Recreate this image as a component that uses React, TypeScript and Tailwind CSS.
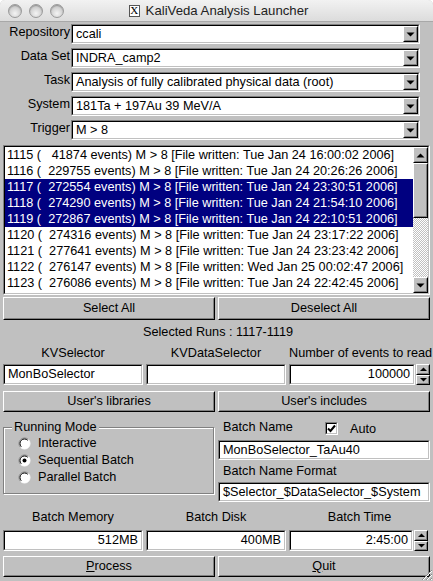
import React from "react";

function Sunken({
  className = "",
  inner = "flex items-center",
  children,
}: {
  className?: string;
  inner?: string;
  children?: React.ReactNode;
}) {
  return (
    <div className={`border border-t-[#808080] border-l-[#808080] border-r-white border-b-white ${className}`}>
      <div className={`h-full w-full border border-t-black border-l-black border-r-[#c0c0c0] border-b-[#c0c0c0] bg-white overflow-hidden ${inner}`}>
        {children}
      </div>
    </div>
  );
}

function Btn({ className = "", children }: { className?: string; children?: React.ReactNode }) {
  return (
    <div className={`border border-t-white border-l-white border-r-black border-b-black bg-[#c0c0c0] ${className}`}>
      <div className="h-full w-full border border-t-[#c0c0c0] border-l-[#c0c0c0] border-r-[#808080] border-b-[#808080] flex items-center justify-center whitespace-nowrap">
        {children}
      </div>
    </div>
  );
}

function Down() {
  return (
    <svg width="9" height="5" viewBox="0 0 9 5">
      <path d="M0.5 0.5 H8.5 L4.5 4.5 Z" fill="black" />
    </svg>
  );
}
function Up() {
  return (
    <svg width="9" height="5" viewBox="0 0 9 5">
      <path d="M0.5 4.5 H8.5 L4.5 0.5 Z" fill="black" />
    </svg>
  );
}
function SmallUp() {
  return (
    <svg width="7" height="4" viewBox="0 0 7 4">
      <path d="M0 4 H7 L3.5 0.5 Z" fill="black" />
    </svg>
  );
}
function SmallDown() {
  return (
    <svg width="7" height="4" viewBox="0 0 7 4">
      <path d="M0 0 H7 L3.5 3.5 Z" fill="black" />
    </svg>
  );
}

function Combo({ value }: { value: string }) {
  return (
    <Sunken className="ml-[1px] w-[349px] h-[20px]">
      <span className="flex-1 pl-[3px] whitespace-nowrap overflow-hidden">{value}</span>
      <Btn className="w-[15px] h-[16px] shrink-0">
        <Down />
      </Btn>
    </Sunken>
  );
}

function Spinner() {
  return (
    <div className="w-[14px] h-[21px] flex flex-col ml-[1px]">
      <Btn className="flex-1">
        <SmallUp />
      </Btn>
      <Btn className="flex-1">
        <SmallDown />
      </Btn>
    </div>
  );
}

function Radio({ on }: { on?: boolean }) {
  return (
    <svg width="13" height="13" viewBox="0 0 13 13" className="shrink-0">
      <circle cx="6.5" cy="6.5" r="5.5" fill="white" />
      <path d="M2.6 10.4 A5.5 5.5 0 0 1 10.4 2.6" stroke="#808080" strokeWidth="1" fill="none" />
      <path d="M3.3 9.7 A4.5 4.5 0 0 1 9.7 3.3" stroke="#000" strokeWidth="1" fill="none" />
      <path d="M10.4 2.6 A5.5 5.5 0 0 1 2.6 10.4" stroke="#ffffff" strokeWidth="1" fill="none" />
      {on && <circle cx="6.5" cy="6.5" r="2" fill="black" />}
    </svg>
  );
}

const rows: [string, string, boolean][] = [
  ["1115", "   41874", false],
  ["1116", "  229755", false],
  ["1117", "  272554", true],
  ["1118", "  274290", true],
  ["1119", "  272867", true],
  ["1120", "  274316", false],
  ["1121", "  277641", false],
  ["1122", "  276147", false],
  ["1123", "  276086", false],
];
const dates = [
  "Tue Jan 24 16:00:02 2006",
  "Tue Jan 24 20:26:26 2006",
  "Tue Jan 24 23:30:51 2006",
  "Tue Jan 24 21:54:10 2006",
  "Tue Jan 24 22:10:51 2006",
  "Tue Jan 24 23:17:22 2006",
  "Tue Jan 24 23:23:42 2006",
  "Wed Jan 25 00:02:47 2006",
  "Tue Jan 24 22:42:45 2006",
];

function Light() {
  return (
    <div className="w-[14px] h-[14px] rounded-full border border-[#9a9a9a] bg-[radial-gradient(circle_at_50%_70%,#f4f4f4_0%,#d2d2d2_55%,#b8b8b8_100%)] shadow-[inset_0_1px_1px_rgba(0,0,0,0.25)]" />
  );
}

export default function App() {
  return (
    <div className="w-[433px] h-[581px] bg-white overflow-hidden">
      <div className="relative w-[433px] h-[581px] bg-[#c0c0c0] rounded-t-[5px] overflow-hidden font-['Liberation_Sans',Arial,sans-serif] text-[12.7px] text-black leading-[15px] flex flex-col">
        {/* title bar */}
        <div className="h-[22px] shrink-0 flex items-center bg-[linear-gradient(#f2f2f2,#dcdcdc)] border-b border-[#a8a8a8] relative">
          <div className="flex gap-[7px] pl-[8px]">
            <Light />
            <Light />
            <Light />
          </div>
          <div className="absolute left-0 right-0 top-0 h-[21px] flex items-center justify-center pl-[4px]">
            <span className="w-[11px] h-[12px] border border-[#555] bg-white flex items-center justify-center font-['Liberation_Serif',serif] text-[11px] leading-none mr-[6px]">
              X
            </span>
            <span className="text-[13.2px] text-[#222]">KaliVeda Analysis Launcher</span>
          </div>
        </div>

        {/* combos */}
        <div className="flex flex-col gap-[4px] pt-[2px]">
          {[
            ["Repository", "ccali"],
            ["Data Set", "INDRA_camp2"],
            ["Task", "Analysis of fully calibrated physical data (root)"],
            ["System", "181Ta + 197Au 39 MeV/A"],
            ["Trigger", "M > 8"],
          ].map(([l, v]) => (
            <div key={l} className="flex items-center h-[20px]">
              <span className="w-[70px] text-right pb-[3px]">{l}</span>
              <Combo value={v} />
            </div>
          ))}
        </div>

        {/* list */}
        <Sunken className="mt-[5px] mx-[3px] h-[150px]" inner="flex">
          <div className="flex-1 flex flex-col">
            {rows.map(([n, ev, sel], i) => (
              <div
                key={n}
                className={`h-[16px] leading-[16px] pl-[2px] whitespace-pre ${sel ? "bg-[#000080] text-white" : ""}`}
              >
                {`${n} (${ev} events) M > 8 [File written: ${dates[i]}]`}
              </div>
            ))}
          </div>
          <div className="w-[15px] flex flex-col">
            <Btn className="h-[16px]">
              <Up />
            </Btn>
            <Btn className="h-[55px]" />
            <div className="flex-1 bg-[image:repeating-conic-gradient(#ffffff_0_25%,#c0c0c0_0_50%)] bg-[length:2px_2px] bg-size-[2px_2px]" />
            <Btn className="h-[16px]">
              <Down />
            </Btn>
          </div>
        </Sunken>

        {/* select buttons */}
        <div className="mt-[2px] flex gap-[3px] px-[3px] h-[23px]">
          <Btn className="flex-1">Select All</Btn>
          <Btn className="flex-1">Deselect All</Btn>
        </div>

        <div className="h-[22px] flex items-center justify-center pl-[3px] pt-[2px]">Selected Runs : 1117-1119</div>

        <div className="grid grid-cols-[140px_140px_1fr] gap-x-[3px] px-[3px] whitespace-nowrap">
          <div className="h-[22px] flex items-center justify-center">KVSelector</div>
          <div className="h-[22px] flex items-center justify-center">KVDataSelector</div>
          <div className="h-[22px] flex items-center justify-center">Number of events to read</div>
          <Sunken className="h-[21px]">
            <span className="pl-[3px]">MonBoSelector</span>
          </Sunken>
          <Sunken className="h-[21px]" />
          <div className="flex h-[21px] pr-[2px]">
            <Sunken className="flex-1 h-[21px]" inner="flex items-center justify-end">
              <span className="pr-[3px]">100000</span>
            </Sunken>
            <Spinner />
          </div>
        </div>

        <div className="mt-[6px] flex gap-[3px] px-[3px] h-[21px]">
          <Btn className="flex-1">User's libraries</Btn>
          <Btn className="flex-1">User's includes</Btn>
        </div>

        {/* mode + batch name */}
        <div className="flex px-[3px]">
          <div className="w-[211px] pt-[15px]">
            <div className="relative h-[67px] border border-[#808080] shadow-[inset_1px_1px_0_white,1px_1px_0_white] pt-[7px] pl-[14px]">
              <span className="absolute left-[8px] top-[-8px] px-[2px] bg-[#c0c0c0]">Running Mode</span>
              {[
                ["Interactive", false],
                ["Sequential Batch", true],
                ["Parallel Batch", false],
              ].map(([l, on]) => (
                <div key={l as string} className="h-[17px] flex items-center gap-[7px]">
                  <Radio on={on as boolean} />
                  <span>{l as string}</span>
                </div>
              ))}
            </div>
          </div>
          <div className="ml-[4px] flex-1 pt-[8px] flex flex-col">
            <div className="h-[16px] flex items-center">
              <span className="pl-[5px] w-[107px] pb-[1px]">Batch Name</span>
              <Sunken className="w-[13px] h-[13px]" inner="flex items-center justify-center">
                <svg width="9" height="9" viewBox="0 0 9 9">
                  <path d="M1 4.5 L3.5 7 L8 1.5" stroke="black" strokeWidth="2" fill="none" />
                </svg>
              </Sunken>
              <span className="ml-[12px] pt-[2px]">Auto</span>
            </div>
            <Sunken className="mt-[4px] h-[20px]">
              <span className="pl-[3px] whitespace-nowrap">MonBoSelector_TaAu40</span>
            </Sunken>
            <div className="h-[22px] flex items-center pl-[5px]">Batch Name Format</div>
            <Sunken className="h-[20px]">
              <span className="pl-[3px] whitespace-nowrap">$Selector_$DataSelector_$System</span>
            </Sunken>
          </div>
        </div>

        {/* batch resources */}
        <div className="grid grid-cols-[140px_140px_1fr] gap-x-[3px] px-[3px]">
          <div className="h-[28px] flex items-center justify-center pt-[2px]">Batch Memory</div>
          <div className="h-[28px] flex items-center justify-center pt-[2px]">Batch Disk</div>
          <div className="h-[28px] flex items-center justify-center pt-[2px]">Batch Time</div>
          <Sunken className="h-[21px]" inner="flex items-center justify-end">
            <span className="pr-[3px]">512MB</span>
          </Sunken>
          <Sunken className="h-[21px]" inner="flex items-center justify-end">
            <span className="pr-[3px]">400MB</span>
          </Sunken>
          <div className="flex h-[21px] pr-[2px]">
            <Sunken className="flex-1 h-[21px]" inner="flex items-center justify-end">
              <span className="pr-[3px]">2:45:00</span>
            </Sunken>
            <Spinner />
          </div>
        </div>

        <div className="mt-[5px] flex gap-[3px] px-[3px] h-[21px]">
          <Btn className="flex-1">
            <span>
              <span className="underline">P</span>rocess
            </span>
          </Btn>
          <Btn className="flex-1">
            <span>
              <span className="underline">Q</span>uit
            </span>
          </Btn>
        </div>

        {/* resize grip */}
        <svg className="absolute right-0 bottom-0" width="14" height="14" viewBox="0 0 14 14">
          <path d="M13 3 L3 13 M13 7 L7 13 M13 11 L11 13" stroke="#8a8a8a" strokeWidth="1" />
          <path d="M13 4 L4 13 M13 8 L8 13 M13 12 L12 13" stroke="#ffffff" strokeWidth="1" />
        </svg>
      </div>
    </div>
  );
}
